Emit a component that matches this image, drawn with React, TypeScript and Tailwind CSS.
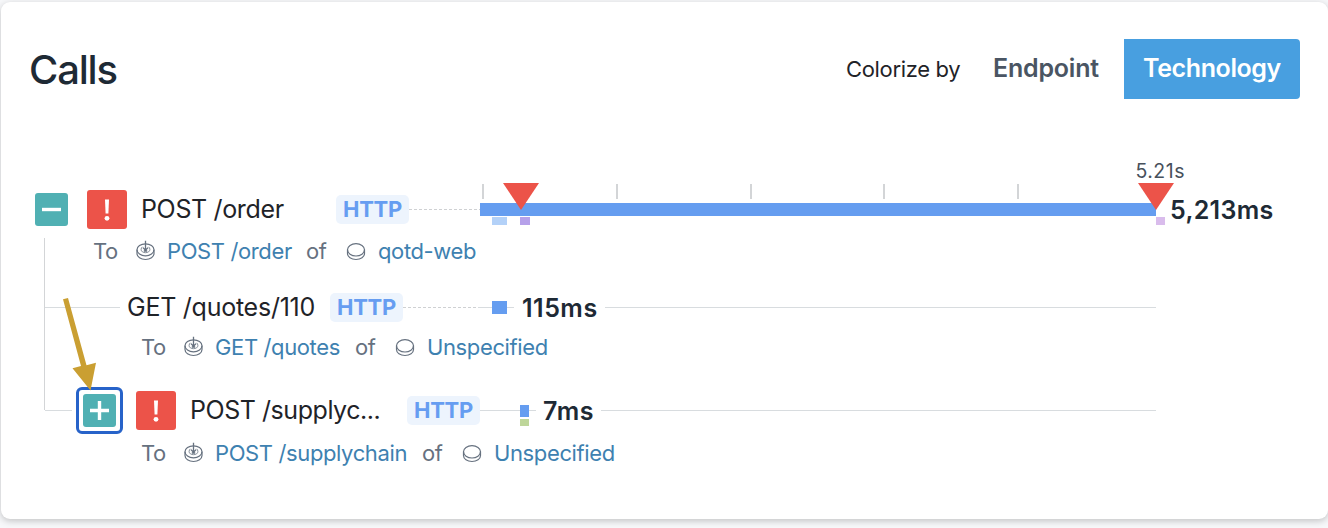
const ErrorBadge = () => (
  <span className="flex h-[39px] w-10 shrink-0 items-center justify-center rounded-[3px] bg-[#ec5349]">
    <svg width="8" height="24" viewBox="0 0 8 24" fill="#fff">
      <path d="M2 1.500h4l-.6 14H2.600z" />
      <circle cx="4" cy="20.300" r="2.400" />
    </svg>
  </span>
);

const Toggle = ({ open }: { open: boolean }) => (
  <span className="flex h-[33px] w-[33px] shrink-0 items-center justify-center rounded-[3px] bg-[#50b0b3]">
    <svg width="19" height="19" viewBox="0 0 19 19" stroke="#fff" strokeWidth="3.4">
      <path d={open ? "M0 9.500H19" : "M0 9.500H19M9.500 0V19"} />
    </svg>
  </span>
);

const EndpointIcon = () => (
  <svg className="shrink-0" width="20" height="22" viewBox="0 0 20 22" fill="none" stroke="#66717f" strokeWidth="1.2">
    <ellipse cx="10.500" cy="9.800" rx="8.500" ry="6" />
    <path d="M2 9.800v3.700c0 3.500 3.800 6 8.500 6s8.500-2.500 8.500-6V9.800" />
    <path d="M7.500 6.800c-.9.600-1.400 1.500-1.400 2.600 0 2.100 1.900 3.300 4.400 3.300s4.400-1.200 4.400-3.300c0-1.100-.5-2-1.400-2.600" strokeWidth=".8" />
    <path d="M10.500 .8v9.200M8 7.600l2.500 2.700L13 7.600M8.800 11h3.400" strokeWidth="1.300" />
  </svg>
);

const ServiceIcon = () => (
  <svg className="shrink-0" width="20" height="22" viewBox="0 0 20 22" fill="none" stroke="#66717f" strokeWidth="1.2">
    <ellipse cx="10" cy="9.800" rx="8.500" ry="6.200" />
    <path d="M1.500 9.800v3.700c0 3.500 3.700 6 8.500 6s8.500-2.500 8.500-6V9.800" />
  </svg>
);

const Http = () => (
  <span className="flex h-[29px] w-[73px] shrink-0 items-center justify-center rounded-[5px] bg-[#edf4fd] text-[22px] font-bold tracking-[-0.300px] text-[#669df1]">
    HTTP
  </span>
);

const Marker = () => (
  <svg width="36" height="27" viewBox="0 0 36 27" fill="#ec5349">
    <path d="M0 0h36L18 27z" />
  </svg>
);

type TargetProps = { link: string; linkWidth: string; service: string };

const Target = ({ link, linkWidth, service }: TargetProps) => (
  <div className="flex h-8 items-center text-[22px] tracking-[-0.380px] whitespace-nowrap text-[#66717f]">
    <span className="w-[42px] shrink-0">To</span>
    <EndpointIcon />
    <a className={`ml-3 shrink-0 text-[#3e81b0] ${linkWidth}`}>{link}</a>
    <span className="w-10 shrink-0">of</span>
    <ServiceIcon />
    <a className="ml-3 text-[#3e81b0]">{service}</a>
  </div>
);

const Line = ({ width }: { width: string }) => <span className={`h-px shrink-0 bg-[#d8dcdf] ${width}`} />;

const Dashes = ({ width }: { width: string }) => (
  <span className={`h-px shrink-0 bg-[repeating-linear-gradient(90deg,#cfd1d3_0_3px,transparent_3px_5px)] ${width}`} />
);

export default function App() {
  return (
    <div className="h-[528px] w-[1328px] overflow-hidden bg-[#f7f8fa] pt-[2px] pl-px font-['Inter',sans-serif] text-[#1f2328]">
      <section className="flex h-[517px] w-[1327px] flex-col rounded-[9px] bg-white shadow-[0_2px_7px_rgba(0,0,0,0.22)]">
        <header className="mt-[37px] flex h-[60px] shrink-0 items-center pr-7 pl-[28px]">
          <h1 className="mt-[2px] flex-1 text-[40px] leading-none font-medium tracking-[-1.200px] text-[#1e2a35]">Calls</h1>
          <span className="w-[147px] text-[22px] tracking-[-0.330px]">Colorize by</span>
          <span className="w-[131px] text-[25px] font-semibold tracking-[-0.200px] text-[#4a5563]">Endpoint</span>
          <button className="flex h-[60px] w-[176px] items-center justify-center rounded-r-[4px] bg-[#489fe0] text-[25px] font-semibold tracking-[-0.400px] text-white">
            Technology
          </button>
        </header>

        <div className="mt-[61px] flex h-[24px] shrink-0 items-center justify-end pr-[143px] text-[19.500px] tracking-[0.500px] text-[#48515c]">
          5.21s
        </div>

        <div className="flex h-[51px] shrink-0 items-center pl-[34px]">
          <Toggle open />
          <span className="w-[19px]" />
          <ErrorBadge />
          <span className="ml-[14px] w-[195px] shrink-0 text-[25px] tracking-[-0.350px] whitespace-nowrap">POST /order</span>
          <Http />
          <Dashes width="w-[71px]" />
          <div className="relative flex h-[51px] w-[676px] shrink-0 flex-col">
            <div className="flex h-[15px] gap-[131.800px] pl-[2px]">
              <i className="w-[2px] bg-[#d3d5d7]" />
              <i className="w-[2px] bg-[#d3d5d7]" />
              <i className="w-[2px] bg-[#d3d5d7]" />
              <i className="w-[2px] bg-[#d3d5d7]" />
              <i className="w-[2px] bg-[#d3d5d7]" />
            </div>
            <div className="mt-1 h-[13px] bg-[#659df0]" />
            <div className="mt-px flex h-2 pl-3">
              <i className="w-[15px] shrink-0 bg-[#b3d1f8]" />
              <i className="ml-[13px] w-[10px] shrink-0 bg-[#b6a1ea]" />
              <i className="ml-[626px] w-[9px] shrink-0 bg-[#d9bcec]" />
            </div>
            <span className="absolute -top-px left-[23px]"><Marker /></span>
            <span className="absolute -top-px left-[658px]"><Marker /></span>
          </div>
          <b className="ml-[14px] pt-[2px] text-[25px] font-semibold tracking-[0.300px] text-[#1e2a35]">5,213ms</b>
        </div>

        <div className="flex h-[253px] shrink-0 pl-[43px]">
          <div className="mt-[3px] h-[172px] w-px shrink-0 bg-[#d3d5d7]" />
          <div className="flex flex-col">
            <div className="pl-[48px]">
              <Target link="POST /order" linkWidth="w-[139px]" service="qotd-web" />
            </div>

            <div className="mt-5 flex h-[41px] items-center">
              <Line width="w-[75px]" />
              <span className="ml-[7px] w-[203px] shrink-0 text-[25px] tracking-[-0.250px] whitespace-nowrap">GET /quotes/110</span>
              <Http />
              <Dashes width="w-[75px]" />
              <Line width="w-[14px]" />
              <i className="h-[13px] w-[15px] bg-[#659df0]" />
              <Line width="w-[7px]" />
              <b className="ml-2 w-[83px] shrink-0 pt-[2px] text-[25px] font-semibold tracking-[0.500px] text-[#1e2a35]">115ms</b>
              <Line width="w-[551px]" />
            </div>
            <div className="mt-[3px] pl-[96px]">
              <Target link="GET /quotes" linkWidth="w-[140px]" service="Unspecified" />
            </div>

            <div className="mt-6 flex h-[47px] items-center">
              <Line width="w-[27px]" />
              <div className="relative ml-[4px] flex h-[47px] w-[47px] shrink-0 items-center justify-center rounded-[6px] border-[3px] border-[#2763c9]">
                <Toggle open={false} />
                <svg className="absolute -top-[93px] -left-[18px]" width="38" height="94" viewBox="0 0 38 94" fill="#ca9f32">
                  <path d="M2 2.200l5-1.300 18.500 67.400 9.500-2.600-5.500 27.800-18-22.200 8.500-2.300z" />
                </svg>
              </div>
              <span className="w-[13px] shrink-0" />
              <ErrorBadge />
              <span className="ml-[14px] w-[217px] shrink-0 pt-px text-[25px] tracking-[-0.450px] whitespace-nowrap">POST /supplyc...</span>
              <Http />
              <Line width="w-10" />
              <span className="relative mt-px h-[12px] w-[9px] shrink-0 bg-[#659df0]">
                <i className="absolute top-[14px] left-0 h-[7px] w-[9px] bg-[#bed69a]" />
              </span>
              <Line width="w-[7px]" />
              <b className="ml-[7px] w-[58px] shrink-0 pt-[2px] text-[25px] font-semibold tracking-[0.500px] text-[#1e2a35]">7ms</b>
              <Line width="w-[555px]" />
            </div>
            <div className="mt-[3px] pl-[96px]">
              <Target link="POST /supplychain" linkWidth="w-[207px]" service="Unspecified" />
            </div>
          </div>
        </div>
      </section>
    </div>
  );
}
